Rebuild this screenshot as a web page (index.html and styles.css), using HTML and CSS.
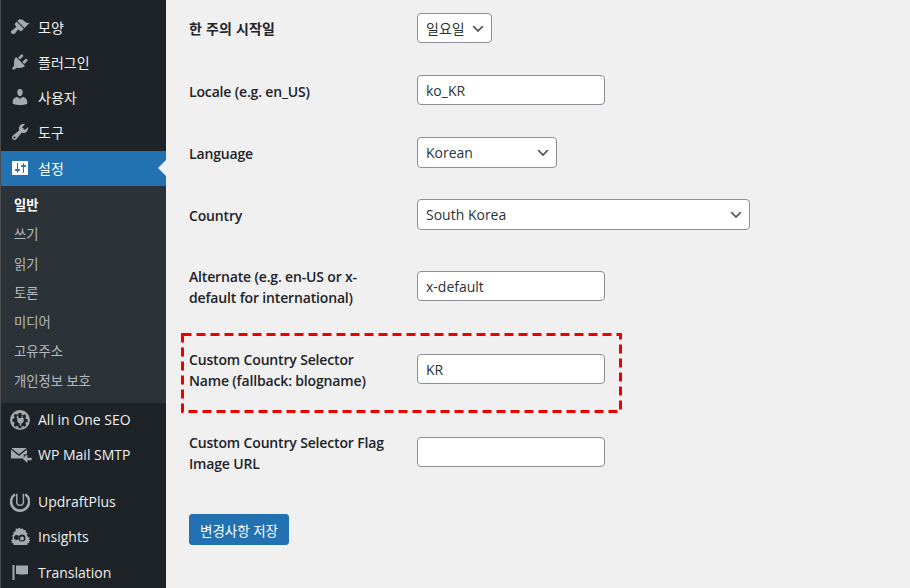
FILE: index.html
```html
<!DOCTYPE html>
<html lang="ko">
<head>
<meta charset="utf-8">
<title>일반 설정</title>
<link rel="stylesheet" href="styles.css">
</head>
<body>
<div class="page">
  <nav class="sidebar">
    <ul class="menu">
      <li class="item"><svg class="icon" viewBox="0 0 20 20"><path d="M14.48 11.06L7.41 3.99l1.5-1.5c.5-.56 2.3-.47 3.51.32 1.21.8 1.43 1.28 2.91 2.1 1.18.64 2.45 1.26 4.45.85zm-.71.71L6.7 4.7 4.93 6.47c-.39.39-.39 1.02 0 1.41l1.06 1.06c.39.39.39 1.03 0 1.42-.6.6-1.43 1.11-2.21 1.69-.35.26-.7.53-1.01.84C1.43 13.23 1 14.07 1 15c0 1.1.9 2 2 2 .93 0 1.77-.43 2.12-.77.31-.31.58-.66.84-1.01.58-.78 1.09-1.61 1.69-2.21.39-.39 1.03-.39 1.42 0l1.06 1.06c.39.39 1.02.39 1.41 0z"/></svg><span>모양</span></li>
      <li class="item"><svg class="icon" viewBox="0 0 20 20"><path d="M13.11 4.36L9.87 7.6 8 5.73l3.24-3.24c.35-.34 1.05-.2 1.56.32.52.51.66 1.21.31 1.55zm-8 1.77l.91-1.12 9.01 9.01-1.19.84c-.71.71-2.63 1.16-3.82 1.16H6.14L4.9 17.26c-.59.59-1.54.59-2.12 0-.59-.58-.59-1.53 0-2.12l1.24-1.24v-3.88c0-1.13.4-3.19 1.09-3.89zm7.26 3.97l3.24-3.24c.34-.35 1.04-.21 1.55.31.52.51.66 1.21.31 1.55l-3.24 3.25z"/></svg><span>플러그인</span></li>
      <li class="item"><svg class="icon" viewBox="0 0 20 20"><path d="M10 9.25c-2.27 0-2.73-3.44-2.73-3.44C7 4.02 7.82 2 9.97 2c2.16 0 2.98 2.02 2.71 3.81 0 0-.41 3.44-2.68 3.44zm0 2.57L12.72 10c2.39 0 4.52 2.33 4.52 4.53v2.49s-3.65 1.13-7.24 1.13c-3.65 0-7.24-1.13-7.24-1.13v-2.49c0-2.25 1.94-4.48 4.47-4.48z"/></svg><span>사용자</span></li>
      <li class="item"><svg class="icon" viewBox="0 0 20 20"><path d="M16.68 9.77c-1.34 1.34-3.3 1.67-4.95.99l-5.41 6.52c-.99.99-2.59.99-3.58 0s-.99-2.59 0-3.57l6.52-5.42c-.68-1.65-.35-3.61.99-4.95 1.28-1.28 3.12-1.62 4.72-1.06l-2.89 2.89 2.82 2.82 2.86-2.87c.53 1.58.18 3.39-1.08 4.65zM3.81 16.21c.4.39 1.04.39 1.43 0 .4-.4.4-1.04 0-1.43-.39-.4-1.03-.4-1.43 0-.39.39-.39 1.03 0 1.43z"/></svg><span>도구</span></li>
      <li class="item item-current"><svg class="icon" viewBox="0 0 20 20"><path d="M18 16V4c0-.55-.45-1-1-1H3c-.55 0-1 .45-1 1v12c0 .55.45 1 1 1h14c.55 0 1-.45 1-1zM8 11h1c.55 0 1 .45 1 1s-.45 1-1 1H8v1.5c0 .28-.22.5-.5.5s-.5-.22-.5-.5V13H6c-.55 0-1-.45-1-1s.45-1 1-1h1V5.5c0-.28.22-.5.5-.5s.5.22.5.5V11zm5-2h-1c-.55 0-1-.45-1-1s.45-1 1-1h1V5.5c0-.28.22-.5.5-.5s.5.22.5.5V7h1c.55 0 1 .45 1 1s-.45 1-1 1h-1v5.5c0 .28-.22.5-.5.5s-.5-.22-.5-.5V9z"/></svg><span>설정</span></li>
    </ul>
    <ul class="submenu">
      <li class="sub sub-current">일반</li>
      <li class="sub">쓰기</li>
      <li class="sub">읽기</li>
      <li class="sub">토론</li>
      <li class="sub">미디어</li>
      <li class="sub">고유주소</li>
      <li class="sub">개인정보 보호</li>
    </ul>
    <ul class="menu">
      <li class="item"><svg class="icon" viewBox="0 0 20 20"><path fill-rule="evenodd" d="M10 0a10 10 0 1 0 0 20 10 10 0 0 0 0-20zM8.700 3h2.600l.4 1.700 1.300.5 1.500-.9 1.800 1.800-.9 1.500.5 1.300 1.700.4v2.600l-1.700.4-.5 1.300.9 1.500-1.800 1.800-1.500-.9-1.300.5-.4 1.700H8.700l-.4-1.700-1.300-.5-1.500.9-1.800-1.800.9-1.500-.5-1.300L2.400 11.400V8.800l1.700-.4.5-1.300-.9-1.500 1.800-1.800 1.500.9 1.300-.5z"/><path d="M7.300 5.800h1.100v2.300h3.200V5.800h1.100v2.300h1v2.500c0 1.500-1 2.700-2.400 3v2.100H9.700v-2.100c-1.400-.3-2.400-1.500-2.400-3V8.100h-1V8.100z"/></svg><span>All in One SEO</span></li>
      <li class="item"><svg class="icon icon-wide" viewBox="0 0 22 20"><path d="M1.300 3h15.400L9 9.300zM1 4.500l8 6.500 8-6.500v4.700h-3.300v4.300H1zM15.500 10.200h1.900v2.600h4.300v2.500h-4.300V18l-4.400-3.900z"/></svg><span>WP Mail SMTP</span></li>
      <li class="item item-spaced"><svg class="icon icon-stroke" viewBox="0 0 20 20"><path class="ring" d="M5 2.200a9 9 0 1 0 10.300.1"/><path class="cup" d="M6.800 1.800v8.200a3.300 3.300 0 0 0 6.600 0V1.800"/></svg><span>UpdraftPlus</span></li>
      <li class="item"><svg class="icon icon-wide" viewBox="0 0 22 20"><path fill-rule="evenodd" d="M6 1l1.500 1.200L9.300.6l1.500 1.500 1.800-.9 1 1.800 2 .1.300 2.100 1.600 1.100-.7 2 1.400 1.600 1.700 1.100-1 1.400 1.500 1-1.500 1.100.5 1.600-2 .2v1.600H3.500v-1.600l-2-.3.7-1.700L.8 13.300l1.900-1 .1-2-.7-1.800L3.600 7.300 3.400 5l2-.6zM12 7.500a3.500 3.500 0 1 0 0 7 3.500 3.500 0 0 0 0-7zm-5.500.5a2.500 2.500 0 1 0 0 5 2.500 2.500 0 0 0 0-5zm5.500 1.500a2 2 0 1 1 0 4 2 2 0 0 1 0-4z"/></svg><span>Insights</span></li>
      <li class="item item-last"><svg class="icon icon-raised" viewBox="0 0 20 20"><path d="M4.500 18V3H2.500v15h2zm1.500-6V3.500h12V12c-3 .6-9 .6-12 0z"/></svg><span>Translation</span></li>
    </ul>
  </nav>
  <main class="content">
    <form class="form">
      <div class="row">
        <label class="label label-ko">한 주의 시작일</label>
        <select class="select select-day"><option>일요일</option></select>
      </div>
      <div class="row">
        <label class="label">Locale (e.g. en_US)</label>
        <input class="input" type="text" value="ko_KR">
      </div>
      <div class="row">
        <label class="label">Language</label>
        <select class="select select-lang"><option>Korean</option></select>
      </div>
      <div class="row row-mid">
        <label class="label">Country</label>
        <select class="select select-country"><option>South Korea</option></select>
      </div>
      <div class="row row-tall">
        <label class="label label-two">Alternate (e.g. en-US or x-default for international)</label>
        <input class="input" type="text" value="x-default">
      </div>
      <div class="row row-tall row-marked">
        <label class="label label-two">Custom Country Selector Name (fallback: blogname)</label>
        <input class="input" type="text" value="KR">
        <svg class="mark" viewBox="0 0 441 80" width="441" height="80"><rect x="1.500" y="1.500" width="438" height="77" fill="none" stroke="#ee0000" stroke-width="3" stroke-dasharray="9 5"/></svg>
      </div>
      <div class="row row-last">
        <label class="label label-two">Custom Country Selector Flag Image URL</label>
        <input class="input" type="text" value="">
      </div>
      <button class="save" type="button">변경사항 저장</button>
    </form>
  </main>
</div>
</body>
</html>
```

FILE: styles.css
```css
* {
  box-sizing: border-box;
}

html,
body {
  margin: 0;
  padding: 0;
  height: 100%;
  overflow: hidden;
  background: #f0f0f1;
  font-family: "Open Sans", "Noto Sans CJK KR", sans-serif;
  font-size: 14px;
}

.page {
  display: flex;
  height: 588px;
}

.sidebar {
  flex: 0 0 166px;
  height: 588px;
  overflow: hidden;
  padding-top: 10px;
  background: #1d2327;
  border-left: 1px solid #4a4d50;
  color: #f0f0f1;
}

.menu,
.submenu {
  list-style: none;
  margin: 0;
  padding: 0;
}

.item {
  display: flex;
  align-items: center;
  position: relative;
  height: 35px;
  padding-left: 9px;
}

.item span {
  position: relative;
  top: -1px;
}

.item-spaced {
  margin-top: 12px;
}

.item-last {
  margin-top: 1px;
}

.icon {
  flex: 0 0 20px;
  width: 20px;
  height: 20px;
  margin-right: 8px;
  fill: #a7aaad;
  transform: translateY(-1px);
}

.icon-wide {
  flex-basis: 22px;
  width: 22px;
  margin-right: 6px;
}

.icon-raised {
  transform: translateY(-2px);
}

.ring,
.cup {
  fill: none;
  stroke: #a7aaad;
}

.ring {
  stroke-width: 2.6;
}

.cup {
  stroke-width: 1.5;
}

.item-current {
  height: 35px;
  margin-top: 1px;
  background: #2271b1;
  color: #fff;
}

.item-current .icon {
  fill: #fff;
}

.item-current::after {
  content: "";
  position: absolute;
  right: 0;
  top: 9px;
  border: 8px solid transparent;
  border-left: 0;
  border-right-color: #f0f0f1;
}

.submenu {
  padding: 5px 0 7px;
  background: #2c3338;
}

.sub {
  height: 29.3px;
  line-height: 29.3px;
  padding-left: 13px;
  font-size: 13.3px;
  color: rgba(240, 246, 252, 0.7);
}

.sub-current {
  color: #fff;
  font-weight: 700;
}

.content {
  flex: 1;
  padding: 13px 0 0 23px;
  color: #1d2327;
}

.row {
  display: grid;
  grid-template-columns: 228px auto;
  justify-content: start;
  align-items: start;
  position: relative;
  height: 62px;
}

.row-mid {
  height: 72px;
}

.row-tall {
  height: 83px;
}

.row-last {
  height: 77px;
}

.label {
  display: block;
  width: 200px;
  height: 30px;
  line-height: 33px;
  font-weight: 600;
  letter-spacing: -0.16px;
}

.label-ko {
  line-height: 32px;
  letter-spacing: 0.2px;
}

.label-two {
  height: auto;
  line-height: 21px;
  margin-top: -5px;
}

.input,
.select {
  height: 30px;
  margin: 0;
  padding: 0 8px;
  border: 1px solid #8c8f94;
  border-radius: 4px;
  background-color: #fff;
  color: #2c3338;
  font: inherit;
}

.input {
  width: 188px;
}

.select {
  appearance: none;
  padding-right: 24px;
  background-image: url("data:image/svg+xml,%3Csvg xmlns='http://www.w3.org/2000/svg' width='20' height='20'%3E%3Cpath d='M5 6l5 5 5-5 2 1-7 7-7-7z' fill='%23555'/%3E%3C/svg%3E");
  background-repeat: no-repeat;
  background-position: right 5px top 55%;
  background-size: 16px 16px;
}

.select-day {
  width: 75px;
}

.select-lang {
  width: 140px;
  height: 31px;
}

.select-country {
  width: 333px;
  height: 31px;
}

.mark {
  position: absolute;
  left: -8px;
  top: -21px;
  pointer-events: none;
}

.save {
  display: block;
  width: 100px;
  height: 31px;
  padding: 0;
  border: 1px solid #2271b1;
  border-radius: 3px;
  background: #2271b1;
  color: #fff;
  font: 13.5px "Open Sans", "Noto Sans CJK KR", sans-serif;
}
```
